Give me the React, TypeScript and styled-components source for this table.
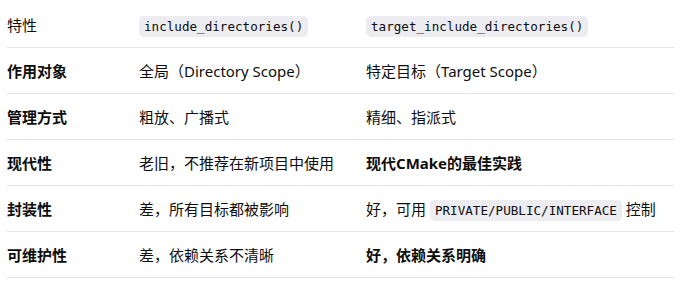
import React from 'react';
import styled, { createGlobalStyle } from 'styled-components';

const GlobalStyle = createGlobalStyle`
  html, body {
    margin: 0;
    padding: 0;
    background: #ffffff;
  }
  body {
    font-family: "Noto Sans", "Noto Sans CJK SC", sans-serif;
    color: #0d0d0d;
  }
`;

const Page = styled.div`
  padding: 2px 18px 0 7px;
`;

const Table = styled.div`
  width: 667px;
  display: flex;
  flex-direction: column;
`;

const Row = styled.div`
  display: grid;
  grid-template-columns: 132px 227px 1fr;
  align-items: center;
  box-sizing: border-box;
  height: 46px;
  border-bottom: 1px solid #e3e3e3;
  font-size: 15px;
  line-height: 22px;
`;

const Cell = styled.div<{ $bold?: boolean }>`
  font-weight: ${(p) => (p.$bold ? 700 : 400)};
  white-space: nowrap;
`;

const Code = styled.code`
  font-family: "DejaVu Sans Mono", "Liberation Mono", monospace;
  font-size: 12.6px;
  line-height: 15px;
  background: #ececf1;
  border-radius: 5px;
  padding: 3px 5px;
  color: #0d0d0d;
`;

type RowData = {
  name: string;
  oldWay: React.ReactNode;
  newWay: React.ReactNode;
  newBold?: boolean;
};

const rows: RowData[] = [
  { name: '作用对象', oldWay: '全局（Directory Scope）', newWay: '特定目标（Target Scope）' },
  { name: '管理方式', oldWay: '粗放、广播式', newWay: '精细、指派式' },
  { name: '现代性', oldWay: '老旧，不推荐在新项目中使用', newWay: '现代CMake的最佳实践', newBold: true },
  {
    name: '封装性',
    oldWay: '差，所有目标都被影响',
    newWay: (
      <>
        好，可用 <Code>PRIVATE/PUBLIC/INTERFACE</Code> 控制
      </>
    ),
  },
  { name: '可维护性', oldWay: '差，依赖关系不清晰', newWay: '好，依赖关系明确', newBold: true },
];

export default function App() {
  return (
    <Page>
      <GlobalStyle />
      <Table>
        <Row>
          <Cell>特性</Cell>
          <Cell>
            <Code>include_directories()</Code>
          </Cell>
          <Cell>
            <Code>target_include_directories()</Code>
          </Cell>
        </Row>
        {rows.map((r) => (
          <Row key={r.name}>
            <Cell $bold>{r.name}</Cell>
            <Cell>{r.oldWay}</Cell>
            <Cell $bold={r.newBold}>{r.newWay}</Cell>
          </Row>
        ))}
      </Table>
    </Page>
  );
}
